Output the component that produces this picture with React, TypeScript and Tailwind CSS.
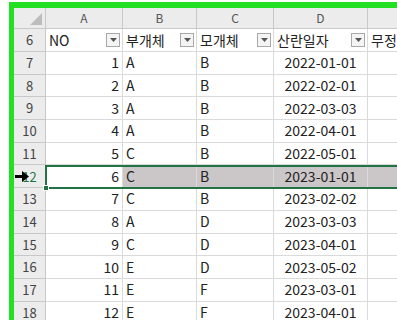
const rows = [
  { n: 7, no: 1, a: "A", b: "B", d: "2022-01-01" },
  { n: 8, no: 2, a: "A", b: "B", d: "2022-02-01" },
  { n: 9, no: 3, a: "A", b: "B", d: "2022-03-03" },
  { n: 10, no: 4, a: "A", b: "B", d: "2022-04-01" },
  { n: 11, no: 5, a: "C", b: "B", d: "2022-05-01" },
  { n: 12, no: 6, a: "C", b: "B", d: "2023-01-01" },
  { n: 13, no: 7, a: "C", b: "B", d: "2023-02-02" },
  { n: 14, no: 8, a: "A", b: "D", d: "2023-03-03" },
  { n: 15, no: 9, a: "C", b: "D", d: "2023-04-01" },
  { n: 16, no: 10, a: "E", b: "D", d: "2023-05-02" },
  { n: 17, no: 11, a: "E", b: "F", d: "2023-03-01" },
  { n: 18, no: 12, a: "E", b: "F", d: "2023-04-01" },
];

const font = "font-['Noto_Sans_CJK_KR','Noto_Sans',sans-serif]";
const grid = "grid grid-cols-[32px_77px_74px_77px_94px_1fr]";
const cell = "border-r border-b border-[#dadada] flex items-center overflow-hidden whitespace-nowrap";
const rowHead = "border-r border-b border-[#c8c8c8] bg-[#ececec] flex items-center justify-center text-[13px] text-[#444]";
const colHead = "border-r border-b border-[#c8c8c8] bg-[#ececec] flex items-center justify-center text-[12px] text-[#555]";

function FilterBtn() {
  return (
    <span className="ml-auto mr-[2px] flex h-[14px] w-[14px] shrink-0 items-center justify-center border border-[#a8a8a8] bg-[#f4f4f4]">
      <svg width="7" height="4" viewBox="0 0 7 4">
        <path d="M0 0h7L3.5 4z" fill="#555" />
      </svg>
    </span>
  );
}

function HeadCell({ label, last }: { label: string; last?: boolean }) {
  return (
    <div className={`${cell} pl-[3px] text-[14px] text-[#222]`}>
      <span>{label}</span>
      {!last && <FilterBtn />}
    </div>
  );
}

export default function App() {
  return (
    <div className={`h-[320px] w-[397px] overflow-hidden bg-white pl-[9px] pt-[2px] ${font}`}>
      <div className="h-[330px] w-[440px] border-t-[6px] border-l-[5px] border-[#23e023] bg-white">
        <div className="relative">
          {/* column letters */}
          <div className={`${grid} h-[21px]`}>
            <div className="relative border-r border-b border-[#c8c8c8] bg-[#ececec]">
              <svg className="absolute bottom-[3px] right-[3px]" width="12" height="12" viewBox="0 0 12 12">
                <path d="M12 0v12H0z" fill="#bdbdbd" />
              </svg>
            </div>
            <div className={colHead}>A</div>
            <div className={colHead}>B</div>
            <div className={colHead}>C</div>
            <div className={colHead}>D</div>
            <div className={colHead}>E</div>
          </div>

          {/* header row 6 */}
          <div className={`${grid} h-[23px]`}>
            <div className={rowHead}>6</div>
            <HeadCell label="NO" />
            <HeadCell label="부개체" />
            <HeadCell label="모개체" />
            <HeadCell label="산란일자" />
            <HeadCell label="무정란" last />
          </div>

          {rows.map((r) => {
            const sel = r.n === 12;
            const bg = sel ? "bg-[#cbc6c7]" : "bg-white";
            return (
              <div key={r.n} className={`${grid} h-[22.7px] text-[14px] text-[#222]`}>
                <div className={sel ? `${rowHead} relative bg-[#bcd9c6] text-[#217346]` : rowHead}>
                  {r.n}
                  {sel && (
                    <svg className="absolute left-[1px] top-[6px]" width="14" height="11" viewBox="0 0 14 11">
                      <path d="M0 4h7V0l7 5.5L7 11V7H0z" fill="#000" />
                    </svg>
                  )}
                </div>
                <div className={`${cell} justify-end pr-[3px] bg-white`}>{r.no}</div>
                <div className={`${cell} pl-[3px] ${bg}`}>{r.a}</div>
                <div className={`${cell} pl-[3px] ${bg}`}>{r.b}</div>
                <div className={`${cell} justify-center ${bg}`}>{r.d}</div>
                <div className={`${cell} ${bg}`}></div>
              </div>
            );
          })}

          {/* selection outline on row 12 */}
          <div className="pointer-events-none absolute left-[31px] right-0 top-[156.5px] h-[24.5px] border-2 border-[#217346]">
            <span className="absolute -bottom-[4px] -left-[4px] h-[6px] w-[6px] border border-white bg-[#217346]" />
          </div>
        </div>
      </div>
    </div>
  );
}
